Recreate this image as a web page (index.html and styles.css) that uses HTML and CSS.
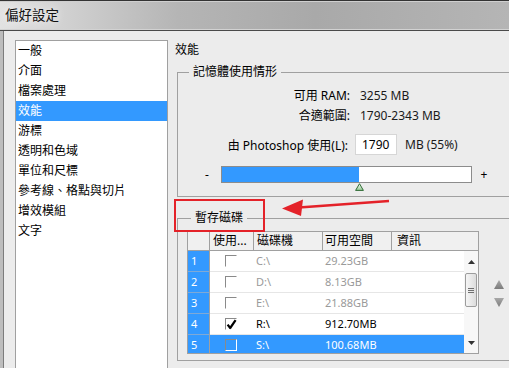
FILE: index.html
```html
<!DOCTYPE html>
<html>
<head>
  <meta charset="utf-8">
  <title>偏好設定</title>
  <link rel="stylesheet" href="styles.css">
</head>
<body>
  <div class="window">
    <div class="titlebar">偏好設定</div>
    <div class="client">
      <ul class="nav">
        <li>一般</li>
        <li>介面</li>
        <li>檔案處理</li>
        <li class="sel">效能</li>
        <li>游標</li>
        <li>透明和色域</li>
        <li>單位和尺標</li>
        <li>參考線、格點與切片</li>
        <li>增效模組</li>
        <li>文字</li>
      </ul>
      <div class="pane">
        <div class="pane-title">效能</div>

        <fieldset class="group mem">
          <legend>記憶體使用情形</legend>
          <div class="stat first"><span class="k">可用 RAM:</span><span class="v">3255 MB</span></div>
          <div class="stat"><span class="k">合適範圍:</span><span class="v">1790-2343 MB</span></div>
          <div class="usage">
            <label class="k" for="ram">由 Photoshop 使用(L):</label>
            <input id="ram" class="num" type="text" value="1790">
            <span class="v">MB (55%)</span>
          </div>
          <div class="slider">
            <span class="sign">-</span>
            <div class="bar">
              <div class="fill" style="width:55%">
                <svg class="thumb" width="9" height="8" viewBox="0 0 9 8">
                  <defs>
                    <linearGradient id="tg" x1="0" y1="0" x2="0" y2="1">
                      <stop offset="0" stop-color="#ffffff"/>
                      <stop offset="1" stop-color="#8fc78f"/>
                    </linearGradient>
                  </defs>
                  <polygon points="4.5,0.7 0.6,7.4 8.4,7.4" fill="url(#tg)" stroke="#2f6b35" stroke-width="1"/>
                </svg>
              </div>
            </div>
            <span class="sign">+</span>
          </div>
        </fieldset>

        <fieldset class="group scratch">
          <legend>暫存磁碟</legend>
          <div class="disks">
            <div class="grid">
              <div class="head">
                <div class="c0"></div>
                <div class="c1">使用...</div>
                <div class="c2">磁碟機</div>
                <div class="c3">可用空間</div>
                <div class="c4">資訊</div>
              </div>
              <div class="body">
                <div class="rows">
                  <div class="row off">
                    <span class="c0">1</span><span class="c1"><i class="box"></i></span><span class="c2">C:\</span><span class="c3">29.23GB</span><span class="c4"></span>
                  </div>
                  <div class="row off">
                    <span class="c0">2</span><span class="c1"><i class="box"></i></span><span class="c2">D:\</span><span class="c3">8.13GB</span><span class="c4"></span>
                  </div>
                  <div class="row off">
                    <span class="c0">3</span><span class="c1"><i class="box"></i></span><span class="c2">E:\</span><span class="c3">21.88GB</span><span class="c4"></span>
                  </div>
                  <div class="row on">
                    <span class="c0">4</span>
                    <span class="c1"><i class="box">
                      <svg width="11" height="11" viewBox="0 0 11 11"><path d="M1.6 5.6 L4.2 9 L9.6 1.2" fill="none" stroke="#000" stroke-width="2.2" stroke-linejoin="round"/></svg>
                    </i></span>
                    <span class="c2">R:\</span><span class="c3">912.70MB</span><span class="c4"></span>
                  </div>
                  <div class="row sel">
                    <span class="c0">5</span><span class="c1"><i class="box"></i></span><span class="c2">S:\</span><span class="c3">100.68MB</span><span class="c4"></span>
                  </div>
                </div>
                <div class="vscroll">
                  <div class="btn">
                    <svg width="7" height="4" viewBox="0 0 7 4"><polygon points="0,4 3.5,0 7,4" fill="#333"/></svg>
                  </div>
                  <div class="sthumb"><span class="grip"></span></div>
                  <div class="btn down">
                    <svg width="7" height="4" viewBox="0 0 7 4"><polygon points="0,0 7,0 3.5,4" fill="#333"/></svg>
                  </div>
                </div>
              </div>
            </div>
            <div class="spin">
              <svg width="10" height="9" viewBox="0 0 10 9">
                <defs>
                  <linearGradient id="ag" x1="0" y1="0" x2="0" y2="1">
                    <stop offset="0" stop-color="#a8a8a8"/>
                    <stop offset="1" stop-color="#7c7c7c"/>
                  </linearGradient>
                </defs>
                <polygon points="5,0 10,9 0,9" fill="url(#ag)"/>
              </svg>
              <svg width="10" height="9" viewBox="0 0 10 9">
                <polygon points="0,0 10,0 5,9" fill="url(#ag)"/>
              </svg>
            </div>
          </div>
        </fieldset>
      </div>
    </div>

    <svg class="annot" width="509" height="368" viewBox="0 0 509 368">
      <rect x="175" y="200" width="89" height="31" fill="none" stroke="#e42229" stroke-width="2"/>
      <path d="M389 201 L299 207.6" fill="none" stroke="#e42229" stroke-width="2.5"/>
      <polygon points="282,208.6 303,199.6 301,216" fill="#e42229"/>
    </svg>
  </div>
</body>
</html>
```

FILE: styles.css
```css
body {
  margin: 0;
  background: #ececec;
  font-family: "Noto Sans", "Noto Sans CJK TC", sans-serif;
  font-size: 12px;
  color: #000;
}

.window {
  position: relative;
  width: 509px;
  height: 368px;
  overflow: hidden;
  background: #bdbdbd;
}

.titlebar {
  height: 29px;
  line-height: 29px;
  padding-left: 5px;
  border-top: 1px solid #333;
  border-bottom: 1px solid #4a4a4a;
  background: linear-gradient(to right, #e2e2e2 0%, #d2d2d2 12%, #b5b5b5 35%, #a9a9a9 62%, #b5b5b5 100%);
  box-shadow: inset 0 1px 0 #cfcfcf, inset 0 -1px 0 #d2d2d2;
  font-size: 13.5px;
  color: #111;
  text-shadow: 0 0 8px #fff;
}

.client {
  display: flex;
  align-items: flex-start;
  height: 337px;
  margin-left: 3px;
  padding: 9px 0 0 11px;
  border-left: 1px solid #7c7c7c;
  background: #ececec;
  overflow: hidden;
  box-sizing: border-box;
}

/* category list */
.nav {
  flex: none;
  width: 151px;
  height: 340px;
  margin: 0;
  padding: 0;
  list-style: none;
  background: #fff;
  border: 1px solid #a0a0a0;
}
.nav li {
  height: 20px;
  line-height: 20px;
  padding-left: 2px;
  white-space: nowrap;
}
.nav li.sel {
  background: #3399ff;
  color: #fff;
}

/* right pane */
.pane {
  flex: 1;
  min-width: 0;
  margin-right: -40px;
  padding-top: 1px;
}
.pane-title {
  line-height: 18px;
  padding-left: 7px;
}

.group {
  min-width: 0;
  margin: 5px 0 0 9px;
  padding: 0;
  border: 1px solid #a0a0a0;
}
.group legend {
  margin-left: 11px;
  padding: 0 4px;
  line-height: 16px;
}
.scratch {
  margin-top: 13px;
}
.scratch legend {
  margin-left: 13px;
}

/* memory usage */
.stat {
  display: flex;
  height: 20px;
  line-height: 20px;
}
.stat.first {
  margin-top: 6px;
}
.stat .k {
  width: 172px;
  text-align: right;
}
.stat .v,
.usage .v {
  color: #1a1a1a;
}
.stat .v {
  margin-left: 10px;
}

.usage {
  display: flex;
  align-items: center;
  height: 21px;
  margin-top: 8px;
}
.usage .k {
  width: 170px;
  text-align: right;
}
.usage .num {
  width: 42px;
  height: 21px;
  margin: 0 0 0 7px;
  padding: 0 0 0 6px;
  box-sizing: border-box;
  border: 1px solid #d6d6d6;
  background: #fff;
  font: 12px "Noto Sans", sans-serif;
  color: #000;
  outline: none;
}
.usage .v {
  margin-left: 8px;
}

.slider {
  display: flex;
  align-items: center;
  height: 17px;
  margin: 11px 0 13px;
  padding-left: 21px;
}
.sign {
  width: 16px;
  text-align: center;
  line-height: 17px;
}
.sign + .bar {
  margin-left: 6px;
}
.bar + .sign {
  margin-left: 4px;
}
.bar {
  width: 249px;
  height: 15px;
  border: 1px solid #8c8c8c;
  background: #fff;
}
.fill {
  position: relative;
  height: 100%;
  background: #3399ff;
}
.thumb {
  position: absolute;
  right: -5px;
  top: 16px;
}

/* scratch disks */
.disks {
  display: flex;
  align-items: flex-start;
  margin: 5px 0 6px 9px;
}
.grid {
  flex: none;
  width: 290px;
  border: 1px solid #a0a0a0;
  background: #fff;
}
.head {
  display: flex;
  height: 18px;
  line-height: 18px;
  background: #f0f0f0;
  border-bottom: 1px solid #a0a0a0;
}
.head div {
  box-sizing: border-box;
  padding-left: 3px;
  border-right: 1px solid #a0a0a0;
  white-space: nowrap;
  overflow: hidden;
}
.head .c0 { width: 22px; padding: 0; }
.head .c1 { width: 44px; }
.head .c2 { width: 69px; }
.head .c3 { width: 69px; padding-left: 2px; }
.head .c4 { flex: 1; padding-left: 5px; border-right: 0; }

.body {
  display: flex;
  height: 102px;
  overflow: hidden;
}
.rows {
  width: 276px;
}
.row {
  display: flex;
  font-size: 11px;
}
.row > span {
  box-sizing: border-box;
  height: 21px;
  line-height: 20px;
  border-bottom: 1px solid #e6e6e6;
  white-space: nowrap;
}
.row .c0 {
  width: 22px;
  padding-left: 3px;
  background: #3399ff;
  color: #fff;
  border-right: 1px solid #a0a0a0;
  border-bottom-color: #7fa9d6;
}
.row .c1 { width: 44px; }
.row .c2 { width: 69px; padding-left: 2px; }
.row .c3 { width: 69px; padding-left: 2px; }
.row .c4 { width: 72px; }

.row.off { color: #9a9a9a; }
.row.on { color: #000; }
.row.sel > span {
  background: #3399ff;
  color: #fff;
  border-bottom-color: #3399ff;
}

.box {
  display: block;
  width: 12px;
  height: 12px;
  margin: 4px 0 0 15px;
  box-sizing: border-box;
  border-top: 1px solid #8a8a8a;
  border-left: 1px solid #8a8a8a;
  border-right: 1px solid #fff;
  border-bottom: 1px solid #fff;
}
.box svg {
  display: block;
  margin: 0 0 0 0;
}

.vscroll {
  display: flex;
  flex-direction: column;
  width: 14px;
  background: #f7f7f7;
}
.vscroll .btn {
  display: flex;
  align-items: center;
  justify-content: center;
  height: 22px;
}
.vscroll .btn.down {
  height: 21px;
  margin-top: auto;
}
.sthumb {
  display: flex;
  align-items: center;
  justify-content: center;
  height: 34px;
  margin: 0 1px;
  box-sizing: border-box;
  border: 1px solid #9c9c9c;
  border-radius: 2px;
  background: linear-gradient(to right, #f5f5f5, #dcdcdc);
}
.grip {
  width: 6px;
  height: 5px;
  background: linear-gradient(#6f6f6f 1px, transparent 1px) 0 0 / 6px 2px;
}

.spin {
  display: flex;
  flex-direction: column;
  gap: 9px;
  margin: 49px 0 0 15px;
}
.spin svg {
  display: block;
}

/* red callout */
.annot {
  position: absolute;
  left: 0;
  top: 0;
  pointer-events: none;
}
```
